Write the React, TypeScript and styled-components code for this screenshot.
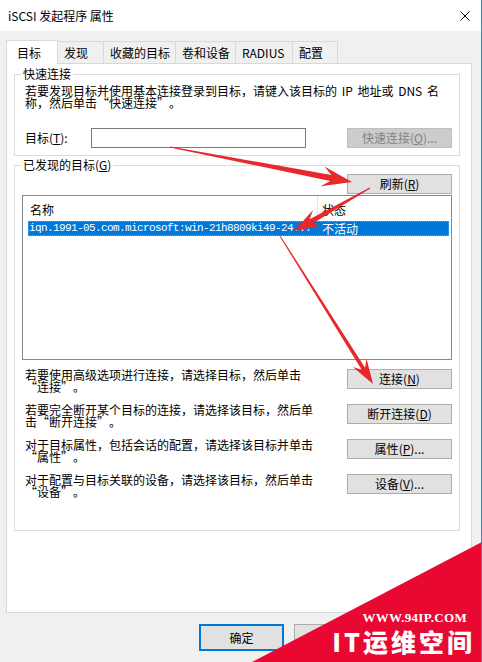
import React from 'react'
import styled, { createGlobalStyle } from 'styled-components'

const GlobalStyle = createGlobalStyle`
  html, body {
    margin: 0;
    padding: 0;
    background: #fff;
  }
  body {
    font-family: 'Noto Sans CJK SC', 'Liberation Sans', sans-serif;
    font-size: 12px;
    color: #000;
  }
  * {
    box-sizing: border-box;
  }
`

const Window = styled.div`
  position: relative;
  width: 482px;
  height: 662px;
  overflow: hidden;
  background: #f0f0f0;
  border-right: 1px solid #2b88d8;
`

const TitleBar = styled.div`
  height: 31px;
  background: #fff;
  display: flex;
  align-items: center;
  justify-content: space-between;
  padding: 1px 11px 0 8px;
`

const TitleText = styled.span`
  font-size: 12px;
  line-height: 14px;
`

const Body = styled.div`
  padding: 9px 0 0 6px;
`

const TabStrip = styled.div`
  display: flex;
  align-items: flex-end;
  height: 24px;
  margin-bottom: -1px;
`

const Tab = styled.div<{ $w: number; $active?: boolean }>`
  width: ${p => p.$w}px;
  height: ${p => (p.$active ? 24 : 22)}px;
  margin-bottom: ${p => (p.$active ? 0 : 1)}px;
  margin-left: -1px;
  padding-left: ${p => (p.$active ? 10 : 6)}px;
  display: flex;
  align-items: center;
  border: 1px solid #d9d9d9;
  border-bottom: none;
  background: ${p => (p.$active ? '#fff' : '#f0f0f0')};
  position: ${p => (p.$active ? 'relative' : 'static')};
  z-index: 2;
  line-height: 14px;

  &:first-child {
    margin-left: 0;
  }
`

const Panel = styled.div`
  width: 466px;
  height: 550px;
  background: #fff;
  border: 1px solid #d9d9d9;
  padding: 3px 10px 0 7px;
`

const Group = styled.fieldset<{ $pt: number; $pb: number }>`
  margin: 0;
  width: 446px;
  min-width: 0;
  border: 1px solid #dcdcdc;
  padding: ${p => p.$pt}px 7px ${p => p.$pb}px 7px;

  & + & {
    margin-top: 2px;
  }
`

const Legend = styled.legend`
  margin-left: -1px;
  padding: 0 2px;
  font-size: 12px;
  line-height: 14px;
`

const Lines = styled.div`
  padding-left: 3px;
  line-height: 12px;
  white-space: nowrap;
`

const Line = styled.div`
  word-spacing: 2px;
`

// full-width curly quotes, as the dialog's Song font draws them
const Quote = styled.span<{ $open?: boolean }>`
  display: inline-block;
  width: 12px;
  text-align: ${p => (p.$open ? 'right' : 'left')};
`

const FieldRow = styled.div`
  display: flex;
  align-items: center;
  margin-top: 19px;
`

const Label = styled.span`
  width: 69px;
  padding-left: 3px;
  line-height: 14px;
  flex-shrink: 0;
`

const TextInput = styled.input`
  width: 215px;
  height: 20px;
  border: 1px solid #7a7a7a;
  padding: 0 3px;
  font: inherit;
  outline: none;
`

const Button = styled.button<{ $w?: number }>`
  width: ${p => p.$w ?? 105}px;
  height: 20px;
  margin-left: auto;
  padding: 0;
  font-family: inherit;
  font-size: 12px;
  line-height: 18px;
  background: #e1e1e1;
  border: 1px solid #adadad;
  color: #000;
  flex-shrink: 0;

  &:disabled {
    background: #cccccc;
    border-color: #bfbfbf;
    color: #838383;
  }
`

const RightRow = styled.div`
  display: flex;
  justify-content: flex-end;
`

const ListView = styled.div`
  height: 165px;
  margin-top: 1px;
  border: 1px solid #828790;
  background: #fff;
`

const ListHeader = styled.div`
  display: grid;
  grid-template-columns: 295px 1fr;
  height: 25px;
`

const HeaderCell = styled.div<{ $pl: number; $divider?: boolean }>`
  display: flex;
  align-items: center;
  padding: 2px 0 0 ${p => p.$pl}px;
  border-right: ${p => (p.$divider ? '1px solid #e5e5e5' : 'none')};
`

const ListRow = styled.div<{ $selected?: boolean }>`
  display: grid;
  grid-template-columns: 289px 1fr;
  height: 15px;
  margin: 0 2px 0 5px;
  background: ${p => (p.$selected ? '#0078d7' : 'transparent')};
  color: ${p => (p.$selected ? '#fff' : '#000')};
  outline: ${p => (p.$selected ? '1px dotted #5aa6e6' : 'none')};
  outline-offset: -1px;
  line-height: 15px;
`

const MonoCell = styled.span`
  padding-left: 1px;
  font-family: 'Liberation Mono', monospace;
  font-size: 11px;
  letter-spacing: -0.6px;
  white-space: nowrap;
  overflow: hidden;
`

const Cell = styled.span`
  padding-left: 5px;
  font-size: 12px;
`

const Actions = styled.div`
  display: flex;
  flex-direction: column;
  gap: 11px;
  margin-top: 9px;
`

const ActionRow = styled.div`
  display: flex;
  align-items: flex-start;
  height: 24px;
`

const Footer = styled.div`
  display: flex;
  justify-content: flex-end;
  gap: 10px;
  margin-top: 11px;
  padding-right: 7px;
`

const DialogButton = styled.button<{ $default?: boolean }>`
  width: 85px;
  height: 27px;
  padding: 0;
  font-family: inherit;
  font-size: 12px;
  background: #e1e1e1;
  border: ${p => (p.$default ? '2px solid #0078d7' : '1px solid #adadad')};
  color: #000;
`

const Overlay = styled.svg`
  position: absolute;
  left: 0;
  top: 0;
  pointer-events: none;
  z-index: 5;
`

const MarkSite = styled.div`
  position: absolute;
  right: 14px;
  top: 611px;
  z-index: 6;
  color: #fff;
  font-family: 'Liberation Serif', serif;
  font-weight: bold;
  font-size: 13px;
  line-height: 13px;
  letter-spacing: 0.3px;
`

const MarkName = styled.div`
  position: absolute;
  right: 6px;
  top: 626px;
  z-index: 6;
  color: #fff;
  font-family: 'Noto Sans CJK SC', sans-serif;
  font-weight: 900;
  font-size: 25px;
  line-height: 30px;
  letter-spacing: 3px;
`

const arrow = (x1: number, y1: number, x2: number, y2: number, head: number, headW: number, neck: number, tail: number) => {
  const dx = x2 - x1
  const dy = y2 - y1
  const L = Math.hypot(dx, dy)
  const ux = dx / L
  const uy = dy / L
  const nx = -uy
  const ny = ux
  const p = (d: number, w: number) => `${(x1 + ux * d + nx * w).toFixed(1)},${(y1 + uy * d + ny * w).toFixed(1)}`
  return [
    p(0, tail),
    p(L - head * 0.72, neck),
    p(L - head, headW),
    p(L, 0),
    p(L - head, -headW),
    p(L - head * 0.72, -neck),
    p(0, -tail),
  ].join(' ')
}

const withQuotes = (text: string) =>
  text.split(/([“”])/).map((part, i) =>
    part === '“' ? <Quote key={i} $open>“</Quote>
      : part === '”' ? <Quote key={i}>”</Quote>
      : part
  )

const tabs = [
  { label: '目标', w: 52, active: true },
  { label: '发现', w: 47 },
  { label: '收藏的目标', w: 73 },
  { label: '卷和设备', w: 61 },
  { label: 'RADIUS', w: 58 },
  { label: '配置', w: 46 },
]

const actions = [
  { lines: ['若要使用高级选项进行连接，请选择目标，然后单击', '“连接”。'], label: '连接', key: 'N', dots: false },
  { lines: ['若要完全断开某个目标的连接，请选择该目标，然后单', '击“断开连接”。'], label: '断开连接', key: 'D', dots: false },
  { lines: ['对于目标属性，包括会话的配置，请选择该目标并单击', '“属性”。'], label: '属性', key: 'P', dots: true },
  { lines: ['对于配置与目标关联的设备，请选择该目标，然后单击', '“设备”。'], label: '设备', key: 'V', dots: true },
]

const App = () => {
  return (
    <Window>
      <GlobalStyle />
      <TitleBar>
        <TitleText>iSCSI 发起程序 属性</TitleText>
        <svg width="10" height="10" viewBox="0 0 10 10">
          <path d="M0.5 0.5 L9.5 9.5 M9.5 0.5 L0.5 9.5" stroke="#000" strokeWidth="1" fill="none" />
        </svg>
      </TitleBar>
      <Body>
        <TabStrip>
          {tabs.map(t => (
            <Tab key={t.label} $w={t.w} $active={t.active}>{t.label}</Tab>
          ))}
        </TabStrip>
        <Panel>
          <Group $pt={4} $pb={7}>
            <Legend>快速连接</Legend>
            <Lines>
              <Line>若要发现目标并使用基本连接登录到目标，请键入该目标的 IP 地址或 DNS 名</Line>
              <Line>{withQuotes('称，然后单击“快速连接”。')}</Line>
            </Lines>
            <FieldRow>
              <Label>目标(<u>T</u>):</Label>
              <TextInput />
              <Button disabled>快速连接(<u>Q</u>)...</Button>
            </FieldRow>
          </Group>
          <Group $pt={2} $pb={32}>
            <Legend>已发现的目标(<u>G</u>)</Legend>
            <RightRow>
              <Button>刷新(<u>R</u>)</Button>
            </RightRow>
            <ListView>
              <ListHeader>
                <HeaderCell $pl={7} $divider>名称</HeaderCell>
                <HeaderCell $pl={4}>状态</HeaderCell>
              </ListHeader>
              <ListRow $selected>
                <MonoCell>iqn.1991-05.com.microsoft:win-21h8809ki49-24...</MonoCell>
                <Cell>不活动</Cell>
              </ListRow>
            </ListView>
            <Actions>
              {actions.map(a => (
                <ActionRow key={a.key}>
                  <Lines>
                    <Line>{withQuotes(a.lines[0])}</Line>
                    <Line>{withQuotes(a.lines[1])}</Line>
                  </Lines>
                  <Button>
                    {a.label}(<u>{a.key}</u>){a.dots ? '...' : ''}
                  </Button>
                </ActionRow>
              ))}
            </Actions>
          </Group>
        </Panel>
        <Footer>
          <DialogButton $default>确定</DialogButton>
          <DialogButton>取消</DialogButton>
          <DialogButton>应用(<u>A</u>)</DialogButton>
        </Footer>
      </Body>
      <Overlay width="482" height="662" viewBox="0 0 482 662">
        <polygon points={arrow(170, 147, 352, 182, 30, 10, 3, 0.6)} fill="#e8282c" />
        <polygon points={arrow(370, 188, 294, 231, 27, 9, 2.6, 0.6)} fill="#e8282c" />
        <polygon points={arrow(280, 236, 373, 384, 25, 8, 2, 0.5)} fill="#e8282c" />
        <polygon points="252,662 482,542 482,662" fill="#e80832" />
      </Overlay>
      <MarkSite>WWW.94IP.COM</MarkSite>
      <MarkName>IT运维空间</MarkName>
    </Window>
  )
}

export default App
